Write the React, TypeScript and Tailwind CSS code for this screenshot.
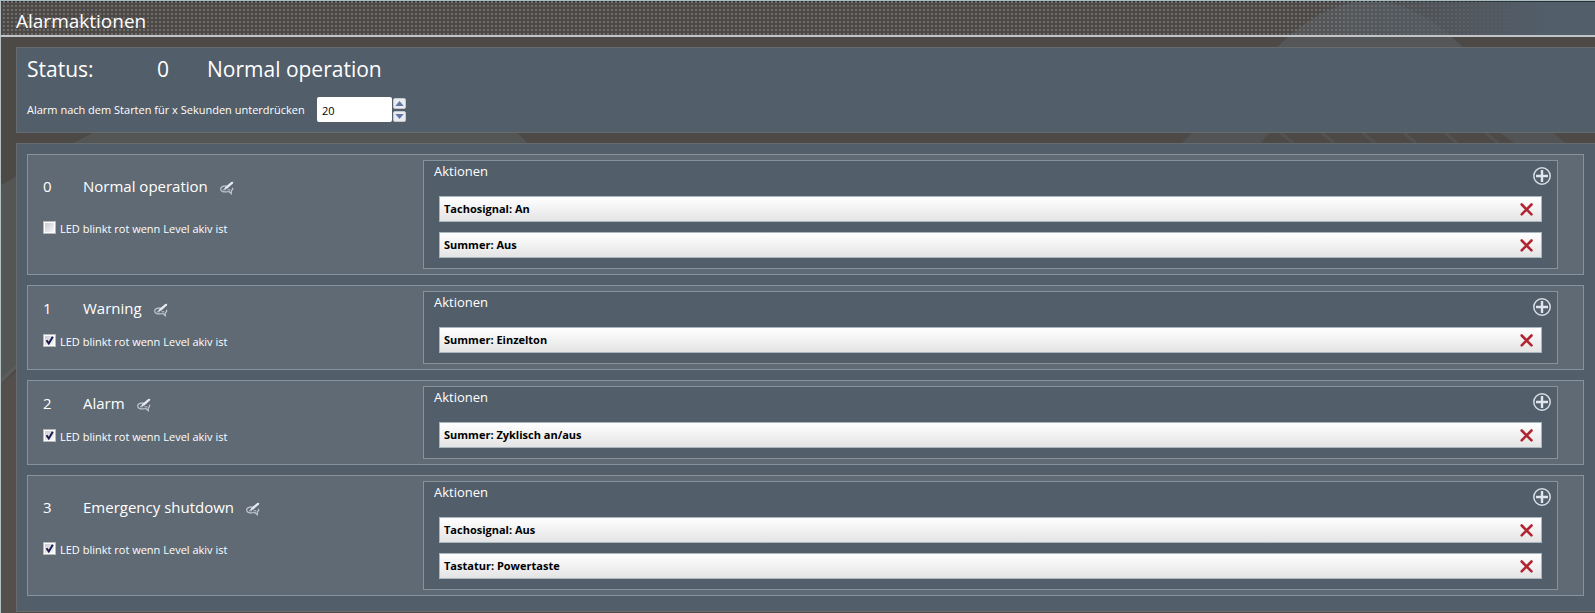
import { useState } from "react";

type Level = {
  id: number;
  name: string;
  blink: boolean;
  actions: string[];
};

const LEVELS: Level[] = [
  { id: 0, name: "Normal operation", blink: false, actions: ["Tachosignal: An", "Summer: Aus"] },
  { id: 1, name: "Warning", blink: true, actions: ["Summer: Einzelton"] },
  { id: 2, name: "Alarm", blink: true, actions: ["Summer: Zyklisch an/aus"] },
  { id: 3, name: "Emergency shutdown", blink: true, actions: ["Tachosignal: Aus", "Tastatur: Powertaste"] },
];

function EditIcon() {
  return (
    <svg width="14" height="14" viewBox="0 0 14 14" fill="none" aria-hidden="true">
      <path
        d="M6.5 4.800C3 4.800.7 6 .7 7.900s2.300 3 5.300 3c1.100 0 2.100-.1 3-.4l2.300 2.200.1-3.100c1.200-.7 1.600-1.700 1-2.800"
        stroke="#bcc5d0"
        strokeWidth="1.200"
      />
      <path d="M13.300.7 11.200 1 5.800 5.600 3.600 8.600l3.700-1.200 5.600-5z" fill="#e6ebf1" />
      <path d="M3 8.800h3M7.500 8.800h2.800" stroke="#bcc5d0" />
    </svg>
  );
}

function PlusIcon() {
  return (
    <svg width="18" height="18" viewBox="0 0 18 18" fill="none" aria-hidden="true">
      <circle cx="9" cy="9" r="8.200" stroke="#d6dee6" strokeWidth="1.500" />
      <path d="M9 3v12M3 9h12" stroke="#dfe6ee" strokeWidth="2.400" />
    </svg>
  );
}

function DeleteIcon() {
  return (
    <svg width="13" height="13" viewBox="0 0 13 13" fill="none" aria-hidden="true">
      <path d="M1.700 1.500l9.800 9.800M11.500 1.500l-9.800 9.800" stroke="#b02531" strokeWidth="2.600" strokeLinecap="round" />
    </svg>
  );
}

function Backdrop() {
  return (
    <svg className="absolute inset-0 -z-20 h-full w-full" aria-hidden="true">
      <path d="M0 185L16 176 72 143 92 133H516L527 143 100 200 16 367 0 385z" fill="#545656" />
      <path d="M0 380L16 366" stroke="#5c5c5b" strokeWidth="3" />
      <path d="M0 385L16 371V613H0z" fill="#544f4d" />
      <path d="M1276 47L1287 37Q1328 1 1369 1T1451 37L1462 47z" fill="#545658" />
      <path d="M1181 143L1191 133H1553l11 10z" fill="#525354" />
      <path d="M1260 143l8-10H1499l14 10z" fill="#4d4947" />
      <path
        d="M1280 133l12 10M1321 133l12 10M1362 133l12 10M1403 133l12 10M1444 133l12 10M1485 133l12 10"
        stroke="#535251"
        strokeWidth="3"
      />
    </svg>
  );
}

function LevelCard({ level }: { level: Level }) {
  const [blink, setBlink] = useState(level.blink);

  return (
    <article className="flex border border-[#87939c] bg-[#606a74] py-[5px] pr-[25px]">
      <div className="grid w-[395px] shrink-0 grid-rows-2 pl-[15px]">
        <div className="flex items-center pb-0.5 text-[15px] leading-5">
          <span className="w-10">{level.id}</span>
          <h2>{level.name}</h2>
          <button type="button" aria-label="Name bearbeiten" className="ml-3 pt-1">
            <EditIcon />
          </button>
        </div>
        <label className="flex items-start gap-1 pt-[6px] text-[11px] leading-4">
          <span className="relative h-[13px] w-[13px]">
            <input
              type="checkbox"
              checked={blink}
              onChange={(e) => setBlink(e.target.checked)}
              className="block h-[13px] w-[13px] appearance-none border border-[#b4b8bd] bg-linear-to-br from-[#c3c5cc] to-white ring-1 ring-white ring-inset"
            />
            {blink && (
              <svg className="pointer-events-none absolute inset-0" width="13" height="13" viewBox="0 0 13 13" fill="none">
                <path d="M3.500 6.200l2.300 3.300L9.800 2.800" stroke="#1d1a52" strokeWidth="2" />
              </svg>
            )}
          </span>
          LED blinkt rot wenn Level akiv ist
        </label>
      </div>

      <section className="min-w-0 flex-1 border border-[#87939c] bg-[#525e6a] pb-[10px]">
        <div className="flex h-[35px] justify-between pr-[6px] pl-[10px]">
          <h3 className="text-[13px] leading-5">Aktionen</h3>
          <button type="button" aria-label="Aktion hinzufügen" className="mt-[6px] self-start">
            <PlusIcon />
          </button>
        </div>
        <ul className="flex flex-col gap-[10px] px-[15px]">
          {level.actions.map((action) => (
            <li
              key={action}
              className="flex h-[26px] items-center justify-between border border-[#a9b7c0] bg-linear-to-b from-white to-[#e4e4e4] pr-2 pl-1 text-[11px] font-bold text-black"
            >
              {action}
              <button type="button" aria-label="Aktion löschen">
                <DeleteIcon />
              </button>
            </li>
          ))}
        </ul>
      </section>
    </article>
  );
}

export default function App() {
  const [delay, setDelay] = useState(20);

  return (
    <main className="relative isolate min-h-screen overflow-hidden border-l border-[#b5c0c2] bg-[#4d4947] font-['Open_Sans','Noto_Sans',sans-serif] text-white">
      <Backdrop />
      <header className="relative flex h-[37px] items-center border-t border-b-2 border-t-[#a9bcc0] border-b-[#c2c5c8] pt-[6px] pl-[15px]">
        <div className="absolute inset-0 -z-10 border-t border-[#263036] bg-linear-to-r from-transparent from-82% to-[#525e6a] to-97%" />
        <div className="absolute inset-0 -z-10 bg-[conic-gradient(#6f6d6c_90deg,transparent_0)] mask-linear-[90deg,black_84%,transparent_96%] bg-size-[4px_4px]" />
        <h1 className="text-[19px] leading-6">Alarmaktionen</h1>
      </header>

      <section className="mt-[10px] ml-[15px] h-[86px] border border-r-0 border-[#666c6e] bg-[#525e6a] pl-[10px]">
        <div className="flex pt-[7px] text-[21px] leading-7">
          <span className="w-[130px]">Status:</span>
          <span className="w-[50px]">0</span>
          <span>Normal operation</span>
        </div>
        <div className="flex items-center pt-[14px] text-[11px]">
          <label htmlFor="delay" className="w-[290px] pt-0.5">
            Alarm nach dem Starten für x Sekunden unterdrücken
          </label>
          <input
            id="delay"
            type="text"
            value={delay}
            onChange={(e) => setDelay(Number(e.target.value) || 0)}
            className="h-[25px] w-[75px] rounded-xs bg-white pt-0.5 pl-[5px] text-black"
          />
          <div className="ml-px flex flex-col gap-[2px]">
            <button
              type="button"
              aria-label="Erhöhen"
              onClick={() => setDelay(delay + 1)}
              className="flex h-[11px] w-[13px] items-center justify-center rounded-xs border border-[#c4c8cf] bg-[#e9ebef]"
            >
              <svg width="9" height="5" viewBox="0 0 10 6"><path d="M5 0l5 6H0z" fill="#5f76ab" /></svg>
            </button>
            <button
              type="button"
              aria-label="Verringern"
              onClick={() => setDelay(Math.max(0, delay - 1))}
              className="flex h-[11px] w-[13px] items-center justify-center rounded-xs border border-[#c4c8cf] bg-[#e9ebef]"
            >
              <svg width="9" height="5" viewBox="0 0 10 6"><path d="M5 6l5-6H0z" fill="#5f76ab" /></svg>
            </button>
          </div>
        </div>
      </section>

      <section className="mt-[10px] ml-[15px] flex flex-col gap-[10px] border border-r-0 border-[#666c6e] bg-[#525e6a] pt-[10px] pr-[11px] pb-[15px] pl-[10px]">
        {LEVELS.map((level) => (
          <LevelCard key={level.id} level={level} />
        ))}
      </section>
    </main>
  );
}
